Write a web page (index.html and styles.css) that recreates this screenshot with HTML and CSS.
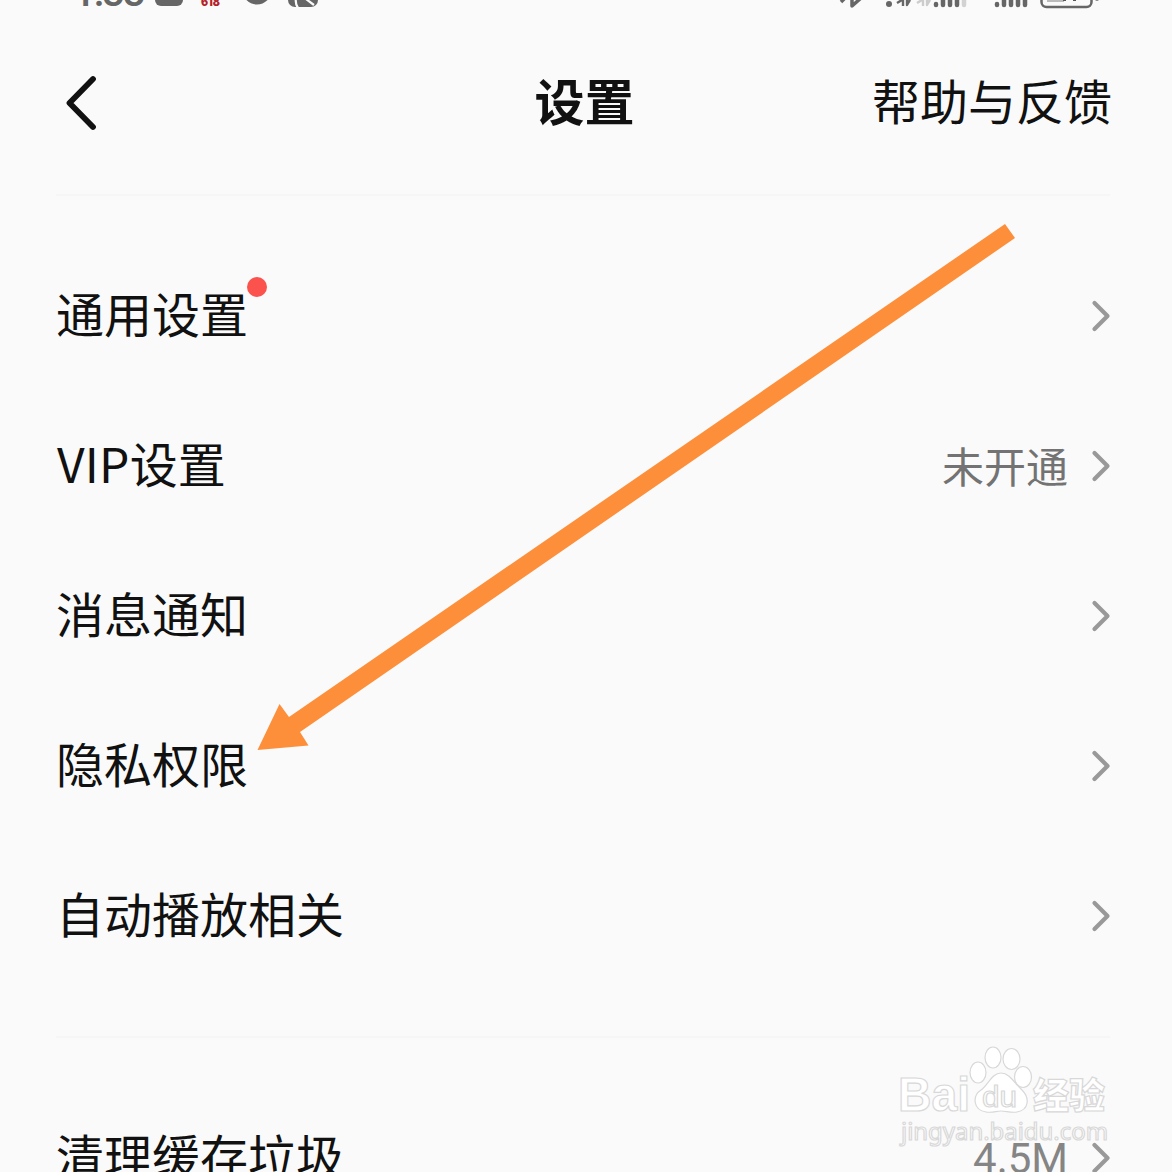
FILE: index.html
```html
<!DOCTYPE html>
<html lang="zh-CN">
<head>
<meta charset="utf-8">
<title>设置</title>
<link rel="stylesheet" href="styles.css">
</head>
<body>
<div class="screen">
  <div class="status">
    <div class="status-left">
      <span class="clock">1:33</span>
      <svg class="status-icons" width="166" height="30" viewBox="0 0 166 30">
        <rect x="0" y="-20" width="28" height="26" rx="6" fill="#666"/>
        <text class="promo" x="46" y="6" textLength="19" lengthAdjust="spacingAndGlyphs">618</text>
        <circle cx="102" cy="-10" r="14.5" fill="#666"/>
        <rect x="133" y="-23" width="30" height="30" rx="7" fill="#666"/>
        <path d="M141 -2Q140 4 143 8M151 -1L159 5" fill="none" stroke="#fafafa" stroke-width="2.2"/>
      </svg>
    </div>
    <svg class="status-right" width="270" height="30" viewBox="0 0 270 30">
      <g fill="none" stroke="#666" stroke-width="3.500" stroke-linejoin="round">
        <path d="M11 2L16 -3M22 -6V6L31 -2L25 -8"/>
        <path d="M73 -3V6M67 3L72 0M77 -3V5L80 0" stroke-width="2.4"/>
        <path d="M93 -3V6M87 3L92 0M97 -3V5L100 0" stroke="#ccc" stroke-width="2.4"/>
      </g>
      <circle cx="59" cy="4" r="3" fill="#666"/>
      <g fill="none" stroke="#666" stroke-width="4.500" stroke-linecap="round">
        <path d="M106 4V5M113 -3V5M120 -3V5M127 -3V5M167 4V5M174 -3V5M181 -3V5M188 -3V5M195 -3V5"/>
        <path d="M134 -3V5" stroke="#d2d2d2"/>
      </g>
      <path d="M217 -6H234V2H217Z" fill="#bbb"/>
      <path d="M233 0H236M243 0H246" stroke="#555" stroke-width="2"/>
      <rect x="211.500" y="-18" width="50" height="25" rx="5" fill="none" stroke="#666" stroke-width="2.500"/>
      <circle cx="267" cy="-1" r="2" fill="#888"/>
    </svg>
  </div>

  <header class="header">
    <svg class="back" width="42" height="60" viewBox="0 0 42 60"><path d="M36 6L12.500 30L36 54" fill="none" stroke="#111" stroke-width="5.800" stroke-linecap="round" stroke-linejoin="round"/></svg>
    <h1 class="title">设置</h1>
    <span class="help">帮助与反馈</span>
  </header>

  <main class="group">
    <div class="row"><span class="label">通用设置<i class="dot"></i></span><svg class="chevron" viewBox="0 0 20 34"><path d="M3.500 4L16.500 17L3.500 30"/></svg></div>
    <div class="row"><span class="label"><span class="latin">VIP</span>设置</span><span class="value">未开通</span><svg class="chevron" viewBox="0 0 20 34"><path d="M3.500 4L16.500 17L3.500 30"/></svg></div>
    <div class="row"><span class="label">消息通知</span><svg class="chevron" viewBox="0 0 20 34"><path d="M3.500 4L16.500 17L3.500 30"/></svg></div>
    <div class="row"><span class="label">隐私权限</span><svg class="chevron" viewBox="0 0 20 34"><path d="M3.500 4L16.500 17L3.500 30"/></svg></div>
    <div class="row"><span class="label">自动播放相关</span><svg class="chevron" viewBox="0 0 20 34"><path d="M3.500 4L16.500 17L3.500 30"/></svg></div>
  </main>
  <section class="group storage">
    <div class="row"><span class="label">清理缓存垃圾</span><span class="value size">4.5M</span><svg class="chevron" viewBox="0 0 20 34"><path d="M3.500 4L16.500 17L3.500 30"/></svg></div>
  </section>

  <svg class="arrow" width="760" height="530" viewBox="0 0 760 530"><path d="M750 0L760 14L45 508L53.500 521.500L2.500 526L24.500 480L34 493Z" fill="#fd8f3a"/></svg>

  <svg class="watermark" width="220" height="110" viewBox="0 0 220 110">
    <g class="mark">
      <text class="brand" x="4" y="74" textLength="72" lengthAdjust="spacingAndGlyphs">Bai</text>
      <ellipse cx="84" cy="35.500" rx="8" ry="10.500"/>
      <ellipse cx="99" cy="20.500" rx="8" ry="10.500"/>
      <ellipse cx="117.500" cy="22" rx="8.500" ry="10.500"/>
      <ellipse cx="129" cy="40" rx="8.500" ry="10.500"/>
      <path d="M107 36C98 36 94 48 87 53C78 59 79 73 92 75C99 76 102 74 107 74C112 74 117 76 123 75C135 73 136 61 128 53C121 47 116 36 107 36Z"/>
      <text class="du" x="88" y="70" textLength="35" lengthAdjust="spacingAndGlyphs">du</text>
      <text class="jingyan" x="139" y="72" textLength="72" lengthAdjust="spacingAndGlyphs">经验</text>
      <text class="site" x="7" y="103" textLength="207" lengthAdjust="spacingAndGlyphs">jingyan.baidu.com</text>
    </g>
  </svg>
</div>
</body>
</html>
```
FILE: styles.css
```css
* { box-sizing: border-box; }
body { margin: 0; background: #fafafa; color: #111; font-family: "Noto Sans CJK SC", sans-serif; }
.screen { position: relative; width: 1172px; height: 1172px; overflow: hidden; background: #fafafa; }

.status { display: flex; justify-content: space-between; height: 30px; padding: 0 72px 0 73px; overflow: hidden; }
.status-left { display: flex; gap: 10px; }
.clock { width: 72px; height: 30px; margin-top: -34px; color: #666; font: 500 40px/54px Roboto, sans-serif; letter-spacing: -2px; white-space: nowrap; }
.status-icons, .status-right { flex: none; }
.promo { fill: #b5202a; font: 900 12px Inter, sans-serif; }

.header { display: grid; grid-template-columns: 1fr auto 1fr; align-items: center; height: 145px; padding: 0 60px 0 57px; }
.back { margin-top: 0; }
.title { margin: 0 0 8px; font-size: 50px; line-height: 72px; font-weight: 700; }
.help { justify-self: end; margin-bottom: 8px; font-size: 48px; line-height: 72px; white-space: nowrap; }

.group { margin: 19px 62px 0 56px; padding-top: 45px; border-top: 2px solid #f6f6f6; height: 842px; }
.row { display: flex; align-items: center; height: 150px; }
.label { position: relative; margin-bottom: 8px; font-size: 48px; line-height: 72px; white-space: nowrap; }
.latin { padding-left: 1px; letter-spacing: 0.2px; }
.dot { position: absolute; left: 191px; top: 1px; width: 20px; height: 20px; border-radius: 50%; background: #fc524d; }
.value { margin: 0 23px 2px auto; color: #737373; font-size: 42px; line-height: 60px; }
.size { margin-bottom: -2px; color: #858585; font-family: Roboto, sans-serif; font-size: 42px; }
.chevron { flex: none; width: 20px; height: 34px; margin-left: auto; margin-right: -1px; }
.value + .chevron { margin-left: 0; }
.chevron path { fill: none; stroke: #999; stroke-width: 4.2; stroke-linecap: round; stroke-linejoin: round; }
.storage { margin-top: 0; height: 200px; }

.arrow { position: absolute; left: 255px; top: 224px; }
.watermark { position: absolute; left: 894px; top: 1037px; }
.mark { fill: #fff; stroke: #d8d8d8; stroke-width: 1.2; }
.brand { font: 700 49px "Liberation Sans", sans-serif; }
.du { font: 400 29px "Liberation Sans", sans-serif; }
.jingyan { font: 900 36px "Noto Sans CJK SC", sans-serif; }
.site { font: 400 24px "Noto Sans", sans-serif; }
```
